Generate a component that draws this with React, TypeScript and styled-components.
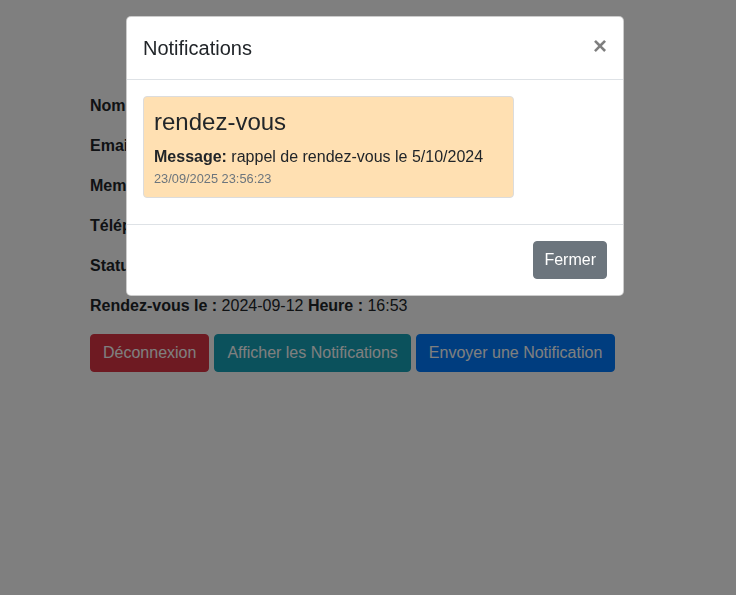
import React from "react";
import styled, { createGlobalStyle } from "styled-components";

const GlobalStyle = createGlobalStyle`
  html, body {
    margin: 0;
    padding: 0;
    background: #ffffff;
  }
  body {
    font-family: "Liberation Sans", Arial, sans-serif;
    font-size: 16px;
    line-height: 1.5;
    color: #212529;
  }
  * { box-sizing: border-box; }
`;

const Page = styled.main`
  min-height: 595px;
  padding: 94px 90px 0 90px;
`;

const InfoLine = styled.p`
  margin: 0 0 16px 0;
  font-size: 16px;
  line-height: 24px;
  white-space: nowrap;
`;

const Label = styled.strong`
  font-weight: 700;
`;

const ButtonRow = styled.div`
  display: flex;
  gap: 5px;
`;

const tones: Record<string, string> = {
  danger: "#dc3545",
  info: "#17a2b8",
  primary: "#007bff",
  secondary: "#6c757d",
};

const Button = styled.button<{ $tone: keyof typeof tones; $tight?: boolean }>`
  font-family: inherit;
  font-size: 16px;
  line-height: 24px;
  padding: ${(p) => (p.$tight ? "6px 10px" : "6px 12px")};
  border-radius: 4px;
  border: 1px solid ${(p) => tones[p.$tone]};
  background: ${(p) => tones[p.$tone]};
  color: #ffffff;
  cursor: pointer;
  white-space: nowrap;
`;

const Backdrop = styled.div`
  position: fixed;
  inset: 0;
  background: rgba(0, 0, 0, 0.5);
  padding: 16px 0 0 126px;
`;

const Dialog = styled.div`
  width: 498px;
  background: #ffffff;
  border: 1px solid rgba(0, 0, 0, 0.2);
  border-radius: 5px;
  display: flex;
  flex-direction: column;
`;

const Header = styled.header`
  display: flex;
  align-items: flex-start;
  justify-content: space-between;
  padding: 16px;
  border-bottom: 1px solid #dee2e6;
`;

const Title = styled.h5`
  margin: 0;
  font-size: 20px;
  font-weight: 500;
  line-height: 30px;
`;

const Close = styled.button`
  margin: -15px -16px -16px auto;
  padding: 16px;
  background: transparent;
  border: 0;
  font-family: inherit;
  font-size: 24px;
  font-weight: 700;
  line-height: 1;
  color: #000000;
  text-shadow: 0 1px 0 #ffffff;
  opacity: 0.5;
  cursor: pointer;
`;

const Body = styled.div`
  padding: 16px;
`;

const Card = styled.div`
  width: 80%;
  margin-bottom: 10px;
  padding: 11px 10px 9px 10px;
  background: #ffe0b2;
  border: 1px solid #dcdcdc;
  border-radius: 4px;
`;

const CardTitle = styled.h4`
  margin: 0 0 8px 0;
  font-size: 24px;
  font-weight: 500;
  line-height: 1.2;
`;

const CardText = styled.p`
  margin: 0;
  font-size: 16px;
  line-height: 24px;
`;

const Stamp = styled.small`
  display: block;
  font-size: 12.8px;
  line-height: 1.5;
  color: #6c757d;
`;

const Footer = styled.footer`
  display: flex;
  justify-content: flex-end;
  padding: 16px;
  border-top: 1px solid #dee2e6;
`;

export default function App() {
  return (
    <>
      <GlobalStyle />
      <Page>
        <InfoLine>
          <Label>Nom :</Label>
        </InfoLine>
        <InfoLine>
          <Label>Email :</Label>
        </InfoLine>
        <InfoLine>
          <Label>Membre :</Label>
        </InfoLine>
        <InfoLine>
          <Label>Téléphone :</Label>
        </InfoLine>
        <InfoLine>
          <Label>Statut :</Label>
        </InfoLine>
        <InfoLine>
          <Label>Rendez-vous le :</Label> 2024-09-12 <Label>Heure :</Label> 16:53
        </InfoLine>
        <ButtonRow>
          <Button $tone="danger">Déconnexion</Button>
          <Button $tone="info">Afficher les Notifications</Button>
          <Button $tone="primary">Envoyer une Notification</Button>
        </ButtonRow>
      </Page>
      <Backdrop>
        <Dialog role="dialog">
          <Header>
            <Title>Notifications</Title>
            <Close aria-label="Close">×</Close>
          </Header>
          <Body>
            <Card>
              <CardTitle>rendez-vous</CardTitle>
              <CardText>
                <Label>Message:</Label> rappel de rendez-vous le 5/10/2024
              </CardText>
              <Stamp>23/09/2025 23:56:23</Stamp>
            </Card>
          </Body>
          <Footer>
            <Button $tone="secondary" $tight>
              Fermer
            </Button>
          </Footer>
        </Dialog>
      </Backdrop>
    </>
  );
}
